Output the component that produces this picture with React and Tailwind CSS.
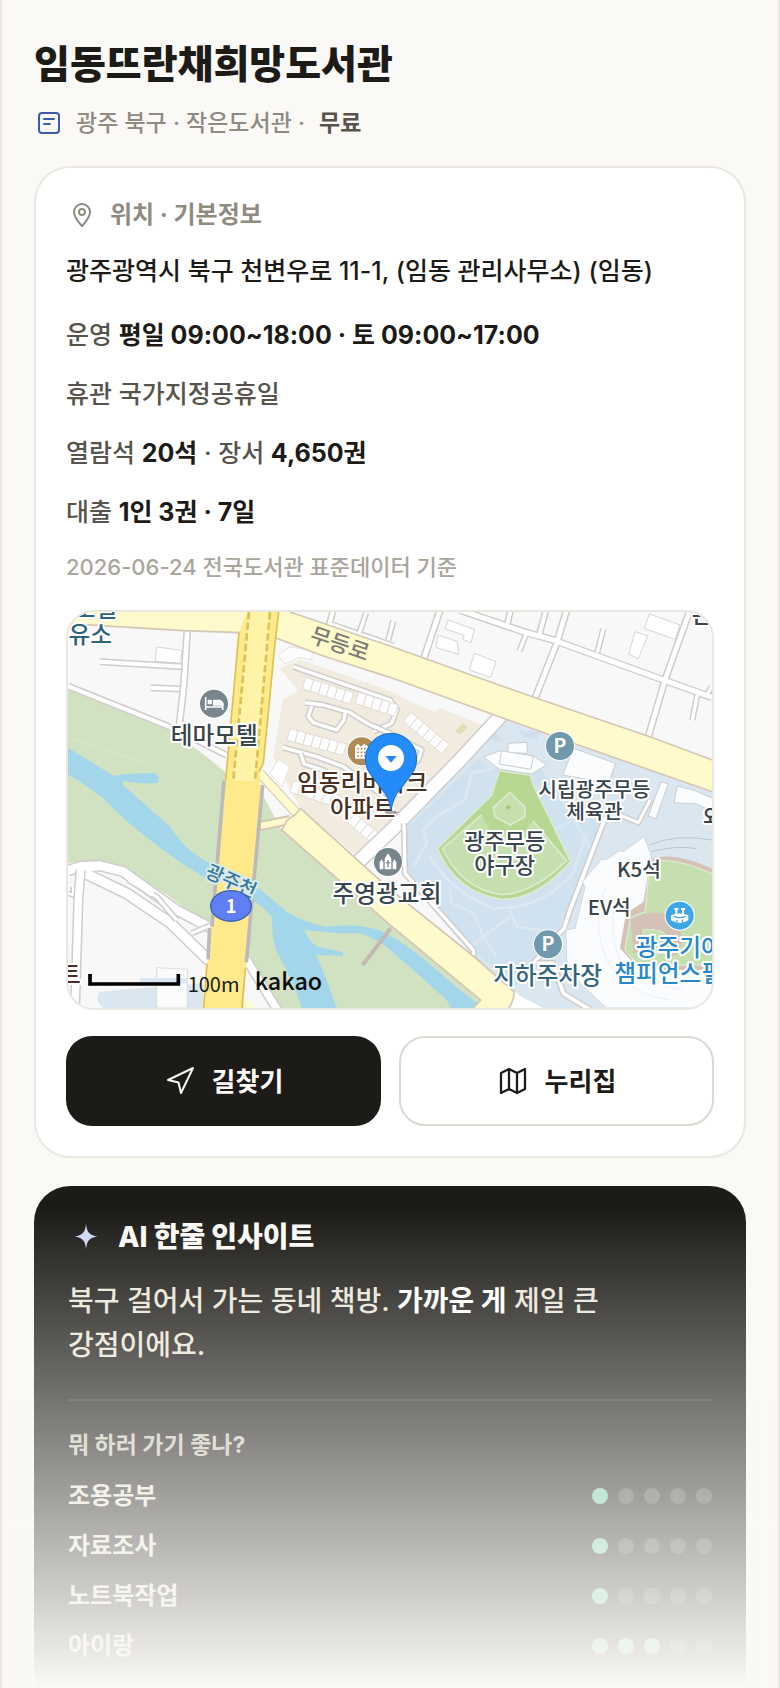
import React from "react";

const FONT = "font-['Inter','Noto_Sans_CJK_KR',sans-serif]";
const MAP_FONT = "'Noto Sans CJK KR', sans-serif";

function Road({ points, w = 14 }) {
  return (
    <>
      <polyline points={points} fill="none" stroke="#cfcdcc" strokeWidth={w + 9} strokeLinejoin="round" />
      <polyline points={points} fill="none" stroke="#fff" strokeWidth={w} strokeLinejoin="round" />
    </>
  );
}

function Houses({ x, y, n, angle = 18, w = 25, h = 36 }) {
  return (
    <g transform={`translate(${x} ${y}) rotate(${angle})`} fill="#fdfdfd" stroke="#d8d3cd" strokeWidth="2">
      {Array.from({ length: n }, (_, i) => (
        <rect key={i} x={i * w} y="0" width={w} height={h} />
      ))}
    </g>
  );
}

function Label({ x, y, size = 71, color = "#38454d", anchor = "middle", children, rotate = 0, halo = "#fff", weight = 500 }) {
  return (
    <text
      x={x}
      y={y}
      fontSize={size}
      fill={color}
      textAnchor={anchor}
      fontWeight={weight}
      fontFamily={MAP_FONT}
      stroke={halo}
      strokeWidth="12"
      strokeLinejoin="round"
      paintOrder="stroke"
      transform={rotate ? `rotate(${rotate} ${x} ${y})` : undefined}
    >
      {children}
    </text>
  );
}

function Poi({ x, y, color, children }) {
  return (
    <g transform={`translate(${x} ${y})`}>
      <circle r="45" fill="#fff" />
      <circle r="42" fill={color} />
      {children}
    </g>
  );
}

function Parking({ x, y }) {
  return (
    <Poi x={x} y={y} color="#7199ac">
      <text y="20" textAnchor="middle" fontSize="58" fontWeight="700" fill="#fff" fontFamily={MAP_FONT}>P</text>
    </Poi>
  );
}

function LocationMap() {
  return (
    <svg viewBox="24 36 1932 1188" className="block w-full" role="img" aria-label="임동뜨란채희망도서관 지도">
      <rect x="24" y="36" width="1932" height="1188" fill="#f8f8f8" />

      {/* riverside park */}
      <path d="M24 268L330 390L440 470L500 520L600 570L665 690L1262 1200L1245 1224H660L560 1080L445 980L330 890L200 810L70 785L24 790Z" fill="#d1e2c3" />
      <path d="M24 411L480 560" stroke="#dfe9d6" strokeWidth="2" />
      <path d="M24 443L160 527Q240 517 285 519Q304 530 292 548Q250 554 192 542Q184 548 190 556L330 680Q380 760 470 800L600 868L680 935Q740 970 800 980Q890 970 950 988Q1010 1010 1100 1085L1200 1170L1256 1213L1243 1224H1172L1160 1200L1060 1110L990 1050Q950 1015 900 1000H830L735 990Q745 1030 780 1042L850 1057L848 1068L768 1064Q790 1110 830 1224H725Q705 1150 650 1055Q635 1010 636 950Q600 910 560 890Q480 860 430 830Q360 790 270 720Q190 660 130 595Q70 550 24 523Z" fill="#a3d6ea" />
      <path d="M908 1095L992 985" stroke="#c4b8b2" strokeWidth="12" />

      {/* sports complex grounds */}
      <path d="M1330 358L1956 575V1224H1425L1240 1070L1035 830V670Z" fill="#dbe7f0" />
      <path d="M1255 475L1035 690V800L1240 1050L1360 1165L1500 975L1630 665L1480 560L1440 500L1290 500Z" fill="#d0e2ef" />
      <path d="M1300 505L1235 520L1215 600L1130 650L1090 690L1100 730L1060 800" fill="none" stroke="#dde9f1" strokeWidth="8" />
      <path d="M1110 770Q1180 880 1300 925Q1440 930 1540 820L1580 700" fill="none" stroke="#dde9f1" strokeWidth="8" />
      <path d="M1170 870L1175 910L1240 940L1270 1010L1310 1070M1350 930L1370 980L1440 990M1230 1040L1350 950" fill="none" stroke="#dde9f1" strokeWidth="7" />
      <path d="M1460 520L1600 760M1480 690L1560 650M1620 740L1740 690" fill="none" stroke="#dde9f1" strokeWidth="6" />
      <path d="M1300 385L1290 420L1330 425M1370 385Q1400 400 1440 395L1430 420L1390 410Z" fill="#cfe0ed" />
      <path d="M1360 1178L1450 1224H1340Z" fill="#fff" />

      {/* apartment blocks */}
      <path d="M660 205L722 180L990 272L1060 310L1125 335L1140 325L1275 378L902 778L722 626L640 470L668 300L715 272Z" fill="#f2ebe0" />
      <path d="M630 520L655 478L690 500L665 560Z" fill="#fff" stroke="#d8d8d8" strokeWidth="2" />
      <path d="M655 165L690 140L758 152L755 180L720 172L675 192Z" fill="#fcfcfc" stroke="#d8d8d8" strokeWidth="2" />
      <Road points="700,200 990,300 1010,330 995,370 940,395" w={10} />
      <Road points="735,308 790,315 870,338 925,372 990,400 1085,450 1075,480 1040,510" w={10} />
      <Road points="755,318 745,350 760,368 830,390 852,360 855,340" w={10} />
      <Road points="668,442 770,470 850,500 960,580 1010,660" w={10} />
      <Road points="722,460 732,492 790,510 860,560" w={10} />
      <Houses x={738} y={232} n={6} />
      <Houses x={896} y={276} n={5} />
      <Houses x={690} y={386} n={7} angle={15} />
      <Houses x={700} y={542} n={6} angle={18} />
      <Houses x={1053} y={337} n={6} angle={40} />
      <Houses x={885} y={640} n={4} angle={40} />
      <path d="M1185 395L1208 370L1225 380L1200 403Z" fill="#e6dcb4" />

      {/* northern side streets */}
      <Road points="820,30 808,72 900,103 1000,138" w={12} />
      <Road points="918,40 898,100" w={10} />
      <Road points="1000,62 985,120" w={10} />
      <Road points="1200,30 1390,95 1480,120 1810,240 1956,292" />
      <Road points="1140,30 1090,180" />
      <Road points="1352,30 1342,72" w={12} />
      <Road points="1458,30 1438,104" w={12} />
      <Road points="1520,30 1490,130 1425,295" />
      <Road points="1398,104 1378,154" w={10} />
      <Road points="1630,86 1612,158" w={10} />
      <Road points="1890,30 1815,240 1765,410" />
      <Road points="1956,260 1940,285" w={10} />
      <Road points="1912,284 1897,360" w={10} />
      <polyline points="1200,30 1390,95 1480,120 1810,240 1956,292" fill="none" stroke="#fff" strokeWidth="14" />
      <g fill="#fff" stroke="#d5d5d5" strokeWidth="3">
        <path d="M1165 60L1243 88L1233 128L1208 118L1213 106L1155 86Z" />
        <path d="M1135 105L1193 125L1195 163L1127 142Z" />
        <path d="M1243 160L1308 185L1292 232L1228 210Z" />
        <path d="M1768 42L1860 75L1845 118L1753 85Z" />
        <path d="M1725 95L1763 108L1735 176L1706 162Z" />
        <path d="M290 141L365 151L362 190L286 184Z" />
      </g>

      {/* western side streets */}
      <Road points="120,185 370,200" w={12} />
      <Road points="272,263 365,267" w={12} />
      <Road points="382,88 372,250 357,385" w={14} />
      <Road points="24,258 340,385 500,466" w={12} />
      <path d="M24 800L60 800L200 870L330 950L445 1080L430 1224H24Z" fill="#f8f8f8" />
      <Road points="24,812 60,800 120,797 190,815 280,880 350,930 455,985" w={26} />
      <Road points="80,822 200,880 330,968 450,1085" w={28} />
      <Road points="205,840 290,890 350,960" w={10} />
      <Road points="395,1000 455,975" w={10} />
      <Road points="24,880 40,885 40,860" w={8} />
      <Road points="62,810 55,900 45,1230" w={22} />
      <path d="M75 805L120 797L190 815L280 880M80 822L200 880" fill="none" stroke="#fff" strokeWidth="24" />
      <Road points="560,1080 655,1235" w={22} />
      <path d="M120 1175L290 1160L430 1150V1224H130Q100 1200 120 1175Z" fill="#dbe7f0" />
      <path d="M290 1103L382 1108V1224H290Z" fill="#fafbfb" stroke="#dcdcdc" strokeWidth="3" />
      <path d="M240 1135H382V1150H240Z" fill="#dbe7f0" />

      {/* diagonal lanes */}
      <Road points="1325,345 1200,480 1000,685 880,800" w={38} />
      <Road points="1032,670 1035,820 1240,1050 1242,1090" w={10} />
      <Road points="1635,655 1530,930 1512,985 1420,1090" w={11} />
      <Road points="1430,1090 1480,1090 1510,1180 1600,1235" w={11} />
      <Road points="1680,645 1735,668 1770,600" w={9} />

      {/* Mudeung-ro and the southern avenue */}
      <path d="M10 20H690V36L990 138L1430 295L1770 410L1970 485V580L1540 430L990 232L790 168L650 115L540 98L370 92L10 70Z" fill="#fefacb" stroke="#d5c6b6" strokeWidth="5" />
      <path d="M600 520L710 640M600 678L690 660" stroke="#d5c6b6" strokeWidth="30" />
      <path d="M598 518L712 642" stroke="#fefacb" strokeWidth="24" />
      <path d="M600 678L700 658" stroke="#fefacb" strokeWidth="18" />
      <path d="M722 626L990 868L1240 1068L1362 1175Q1364 1205 1335 1240H1225L1262 1200L990 975L665 690L682 660L704 645Z" fill="#fefacb" stroke="#d5c6b6" strokeWidth="5" />
      <path d="M540 1180L600 1235H540Z" fill="#fefacb" />

      {/* main bridge road */}
      <path d="M562 36H655L648 110L612 480L600 520L604 640L560 1090L545 1224H430L443 1080L490 640L497 540L537 98Z" fill="#ffe98a" />
      <path d="M567 36H630L585 545L520 540Z" fill="#fff3a8" />
      <path d="M537 98L497 540M656 36L646 120L610 490L597 515M441 1090L431 1224M556 1105L546 1224" fill="none" stroke="#dcc152" strokeWidth="5" />
      <path d="M567 36L520 540M630 36L585 545" stroke="#d8c557" strokeWidth="8" strokeDasharray="22 10" />
      <path d="M492 542L456 980M449 985L444 1078M608 555L559 1087" stroke="#bcbab8" strokeWidth="11" />

      {/* baseball field */}
      <path d="M1318 512L1410 525L1422 560L1532 785Q1430 900 1325 898Q1190 880 1132 746L1295 585Z" fill="#b6d892" stroke="#dcebd0" strokeWidth="5" />
      <path d="M1345 575L1520 782Q1420 880 1325 884Q1205 868 1148 746Z" fill="#c5e0ae" stroke="#dcebd0" strokeWidth="5" />
      <path d="M1262 640L1290 690Q1350 720 1395 695L1435 640L1350 560Z" fill="#b6d892" />
      <path d="M1350 578L1395 622V650L1350 675L1305 650L1300 622Z" fill="#c5e0ae" stroke="#dcebd0" strokeWidth="5" />
      <path d="M1345 614L1353 622L1345 630L1337 622Z" fill="#9fcc7c" />

      {/* gymnasium buildings */}
      <g fill="#fbfcfe" stroke="#c9ccd0" strokeWidth="3">
        <path d="M1345 430L1400 427L1403 460L1343 458Z" />
        <path d="M1270 470L1322 452L1420 468L1460 495L1415 522L1318 508Z" />
        <path d="M1324 453L1318 492L1412 508L1420 468" fill="none" />
        <path d="M1540 445L1667 490L1645 550L1508 525Z" />
        <path d="M1803 545L1824 552L1788 656L1765 648Z" />
        <path d="M1852 558L1900 570L1970 600V640L1910 612L1842 608Z" />
      </g>

      {/* champions field */}
      <path d="M1768 735Q1850 700 1956 720M1775 755Q1850 735 1910 746" fill="none" stroke="#b3c6d3" strokeWidth="3" />
      <path d="M1752 710L1775 770L1752 900L1690 1050L1740 1100L1956 1110V1224H1640L1560 1150L1520 1080L1518 990L1545 985L1575 862L1567 845L1625 778L1640 778L1680 752L1690 755Z" fill="#fbfcfe" stroke="#d3d8de" strokeWidth="3" />
      <path d="M1640 860Q1590 960 1640 1080Q1700 1180 1830 1200M1675 880Q1640 980 1680 1080Q1750 1150 1870 1170" fill="none" stroke="#eff2f6" strokeWidth="4" />
      <path d="M1772 778Q1840 750 1970 812V1110H1740L1680 1045L1698 940L1752 905Z" fill="#d5c2b6" />
      <path d="M1770 788Q1840 765 1970 828V1095H1735L1694 1050L1712 952L1755 935Z" fill="#c5e0ae" stroke="#e5eee0" strokeWidth="3" />
      <path d="M1712 955Q1800 920 1840 955Q1880 1000 1856 1060L1835 1070Q1840 1000 1750 985L1745 1050L1720 1060Z" fill="#d5c2b6" />
      <path d="M1750 990Q1820 980 1835 1030L1820 1060H1745Z" fill="#c5e0ae" stroke="#e0ead8" strokeWidth="3" />

      {/* labels */}
      <Label x={172} y={52} color="#2f637c" anchor="end">오일</Label>
      <Label x={156} y={129} color="#2f637c" anchor="end">유소</Label>
      <Label x={832} y={154} size={66} color="#7d7b76" rotate={19} halo="#fefacb">무등로</Label>
      <Label x={1895} y={68} anchor="start">은</Label>
      <Poi x={462} y={311} color="#77868d">
        <path d="M-25 -20V19M-25 10H26V19M26 10V-2" fill="none" stroke="#fff" strokeWidth="5" />
        <path d="M-3 -12H18Q27 -10 28 -2V6H-3Z" fill="#fff" />
        <rect x="-19" y="-12" width="13" height="14" rx="3" fill="#fff" />
      </Poi>
      <Label x={463} y={431}>테마모텔</Label>
      <Poi x={905} y={454} color="#b18a55">
        <path d="M-20 22V-14L-11 -23L-2 -14L7 -23L20 -14V22Z" fill="#fff" />
        <path d="M-13 -8H14M-13 3H14M-13 14H14" stroke="#b18a55" strokeWidth="5" strokeDasharray="5 5" />
      </Poi>
      <Label x={907} y={572} color="#4b2f22">임동리버파크</Label>
      <Label x={908} y={651} color="#4b2f22">아파트</Label>
      <Poi x={984} y={786} color="#77868d">
        <path d="M-10 22V-10L0 -26L10 -10V22ZM-25 22V0L-19 -8L-14 0V22ZM14 22V0L19 -8L25 0V22Z" fill="#fff" />
        <path d="M0 -6V16M-6 2H6" stroke="#77868d" strokeWidth="4" />
      </Poi>
      <Label x={981} y={905}>주영광교회</Label>
      <Label x={1334} y={746} size={66}>광주무등</Label>
      <Label x={1334} y={819} size={66}>야구장</Label>
      <Parking x={1500} y={438} />
      <Label x={1603} y={590} size={61}>시립광주무등</Label>
      <Label x={1603} y={656} size={61}>체육관</Label>
      <Label x={1737} y={832} size={61}>K5석</Label>
      <Label x={1648} y={946} size={61}>EV석</Label>
      <Label x={1928} y={674} size={66} anchor="start">외야석</Label>
      <Poi x={1859} y={947} color="#3fa7e8">
        <path d="M-26 -1Q0 -12 26 -1V14Q0 30 -26 14Z" fill="#fff" />
        <path d="M-16 -20H-4M4 -20H16M-10 -20V-4M10 -20V-4" stroke="#fff" strokeWidth="6" />
        <path d="M-18 2Q0 10 18 2M-8 12V20M8 12V20" fill="none" stroke="#3fa7e8" strokeWidth="4" />
      </Poi>
      <Label x={1727} y={1068} color="#2688cf" anchor="start">광주기아</Label>
      <Label x={1663} y={1147} color="#2688cf" anchor="start">챔피언스필드</Label>
      <Parking x={1464} y={1033} />
      <Label x={1463} y={1151} color="#33657f">지하주차장</Label>
      <Label x={62} y={1148} color="#4b2f22" anchor="end">트</Label>
      <Label x={505} y={862} size={58} color="#3b7793" rotate={24} halo="#d5ebf2">광주천</Label>
      <ellipse cx="513" cy="918" rx="61" ry="46" fill="#5f80f4" stroke="#3a62b0" strokeWidth="4" />
      <text x="513" y="938" textAnchor="middle" fontSize="54" fontWeight="700" fill="#fff" fontFamily={MAP_FONT}>1</text>

      {/* scale and provider */}
      <path d="M90 1122V1152H355V1122" fill="none" stroke="#000" strokeWidth="11" />
      <text x="383" y="1176" fontSize="60" fill="#1b1b1b" fontFamily={MAP_FONT}>100m</text>
      <text x="584" y="1170" fontSize="70" fontWeight="500" fill="#0b0b0b" fontFamily={MAP_FONT}>kakao</text>

      {/* place marker */}
      <ellipse cx="993" cy="637" rx="20" ry="5" fill="#000" opacity=".35" />
      <path d="M993 632Q986 590 968 572L932 524A77 77 0 1 1 1054 524L1018 572Q1000 590 993 632Z" fill="#238bfa" stroke="#1b6fcb" strokeWidth="3" />
      <circle cx="993" cy="474" r="39" fill="#fff" />
      <path d="M976 468H1010L993 488Z" fill="#238bfa" />
    </svg>
  );
}

const activities = [
  { name: "조용공부", score: 1 },
  { name: "자료조사", score: 1 },
  { name: "노트북작업", score: 1 },
  { name: "아이랑", score: 3 },
];

function Dots({ score }) {
  return (
    <span className="flex gap-[10px]" role="img" aria-label={`5점 중 ${score}점`}>
      {[1, 2, 3, 4, 5].map((n) => (
        <span key={n} className={n <= score ? "size-4 rounded-full bg-[#6fcfa6]" : "size-4 rounded-full bg-[#45433f]"} />
      ))}
    </span>
  );
}

function Row({ children }) {
  return <p className="pt-6 text-[25px] font-medium leading-[35px] text-[#57544c]">{children}</p>;
}

function Strong({ children }) {
  return <strong className="font-bold text-[#1d1b17]">{children}</strong>;
}

export default function App() {
  return (
    <main className={`${FONT} relative h-screen overflow-hidden border-x-2 border-[#e9e7e0] bg-[#faf9f5] px-8 text-[#1d1b17]`} lang="ko">
      <header className="pt-10">
        <h1 className="text-[39px] font-extrabold leading-[48px]">임동뜨란채희망도서관</h1>
        <div className="mt-4 flex items-center gap-3 text-[23px] font-medium leading-[38px] text-[#8f8b80]">
          <svg className="size-[30px]" viewBox="0 0 30 30" fill="none" stroke="#3f5bab" strokeWidth="2" strokeLinecap="round" aria-hidden="true">
            <rect x="5" y="5" width="20" height="20" rx="3" />
            <path d="M10 11H20M10 16H16" />
          </svg>
          <p>
            광주 북구 · 작은도서관 · <span className="ml-2 font-semibold text-[#57544c]">무료</span>
          </p>
        </div>
      </header>

      <section className="mt-6 rounded-[36px] border-2 border-[#e9e7e0] bg-white p-[30px]">
        <h2 className="flex items-center gap-3 text-2xl font-bold leading-[34px] text-[#8f8b80]">
          <svg className="size-8" viewBox="0 0 32 32" fill="none" stroke="currentColor" strokeWidth="2" strokeLinejoin="round" aria-hidden="true">
            <path d="M16 27C12 22.500 8 18.500 8 13A8 8 0 0 1 24 13C24 18.500 20 22.500 16 27Z" />
            <circle cx="16" cy="13" r="3" />
          </svg>
          위치 · 기본정보
        </h2>
        <p className="pt-5 text-[25px] font-medium leading-[38px]">광주광역시 북구 천변우로 11-1, (임동 관리사무소) (임동)</p>
        <div className="pt-1">
          <Row>운영 <Strong>평일 09:00~18:00 · 토 09:00~17:00</Strong></Row>
          <Row>휴관 국가지정공휴일</Row>
          <Row>열람석 <Strong>20석</Strong> · 장서 <Strong>4,650권</Strong></Row>
          <Row>대출 <Strong>1인 3권 · 7일</Strong></Row>
        </div>
        <p className="pt-5 text-[22px] font-medium leading-[34px] text-[#aaa69b]">2026-06-24 전국도서관 표준데이터 기준</p>
        <div className="mt-[26px] overflow-hidden rounded-[28px] border-2 border-[#e9e7e0]">
          <LocationMap />
        </div>
        <div className="mt-[26px] grid grid-cols-2 gap-[18px]">
          <button type="button" className="flex h-[90px] items-center justify-center gap-4 rounded-[26px] bg-[#1d1b17] text-[26px] font-bold text-[#faf9f5]">
            <svg className="size-8" viewBox="0 0 32 32" fill="none" stroke="currentColor" strokeWidth="2" strokeLinejoin="round" aria-hidden="true">
              <path d="M4 15L29 3L17 28L14.500 17.500Z" />
            </svg>
            길찾기
          </button>
          <a href="#homepage" className="flex h-[90px] items-center justify-center gap-4 rounded-[26px] border-2 border-[#dcd9d0] bg-white text-[26px] font-bold">
            <svg className="size-8" viewBox="0 0 24 24" fill="none" stroke="currentColor" strokeWidth="1.700" strokeLinejoin="round" aria-hidden="true">
              <path d="M3 6L9 3L15 6L21 3V18L15 21L9 18L3 21ZM9 3V18M15 6V21" />
            </svg>
            누리집
          </a>
        </div>
      </section>

      <section className="mt-7 rounded-[36px] bg-[#1d1b17] p-[34px]">
        <h2 className="flex h-[34px] items-center gap-[14px] text-[28px] font-extrabold leading-[34px] text-[#faf9f5]">
          <svg className="size-9" viewBox="0 0 36 36" fill="#cdd8f7" aria-hidden="true">
            <path d="M18 5C19 13.500 21.500 16.500 29.500 17.500C21.500 18.500 19 21.500 18 30C17 21.500 14.500 18.500 6.500 17.500C14.500 16.500 17 13.500 18 5Z" />
          </svg>
          AI 한줄 인사이트
        </h2>
        <p className="max-w-[560px] pt-[25px] text-[28px] font-medium leading-[44px] text-[#e9e5d9]">
          북구 걸어서 가는 동네 책방. <strong className="font-bold text-white">가까운 게</strong> 제일 큰 강점이에요.
        </p>
        <div className="mt-8 border-t-2 border-[#33312d] pt-7">
          <h3 className="text-[23px] font-bold leading-8 text-[#c9c5b8]">뭐 하러 가기 좋나?</h3>
          <ul className="pt-[10px]">
            {activities.map((a) => (
              <li key={a.name} className="flex h-[50px] items-center justify-between text-2xl font-semibold text-[#e9e5d9]">
                {a.name}
                <Dots score={a.score} />
              </li>
            ))}
          </ul>
        </div>
      </section>

      <div className="pointer-events-none absolute inset-x-0 bottom-0 h-[480px] bg-linear-to-b from-[#faf9f5]/0 to-[#faf9f5]" />
    </main>
  );
}
